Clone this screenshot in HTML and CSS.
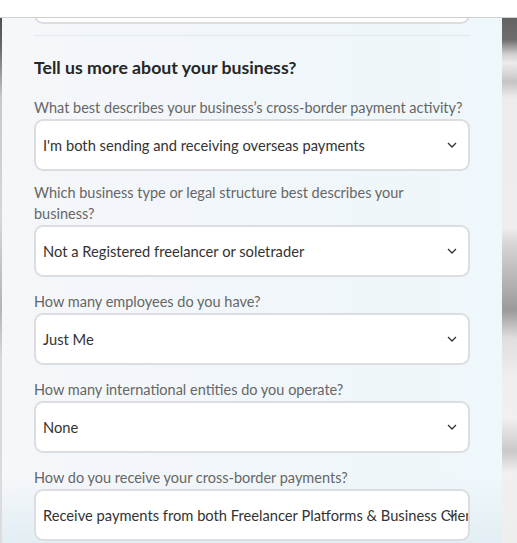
FILE: index.html
```html
<!DOCTYPE html>
<html lang="en">
<head>
<meta charset="utf-8">
<title>Tell us more about your business</title>
<link rel="stylesheet" href="styles.css">
</head>
<body>
<div class="topbar"></div>
<div class="stage">
  <div class="side side--left"></div>
  <main class="panel">
    <div class="select select--prev"><span class="select-value"></span></div>
    <hr class="divider">
    <h2 class="heading">Tell us more about your business?</h2>

    <div class="field field--first">
      <label class="label">What best describes your business’s cross-border payment activity?</label>
      <div class="select"><span class="select-value">I'm both sending and receiving overseas payments</span>
        <svg class="chev" width="10" height="6" viewBox="0 0 10 6"><path d="M1 1l4 4 4-4" fill="none" stroke="#333" stroke-width="1.3"/></svg></div>
    </div>

    <div class="field field--wrap">
      <label class="label">Which business type or legal structure best describes your business?</label>
      <div class="select"><span class="select-value">Not a Registered freelancer or soletrader</span>
        <svg class="chev" width="10" height="6" viewBox="0 0 10 6"><path d="M1 1l4 4 4-4" fill="none" stroke="#333" stroke-width="1.3"/></svg></div>
    </div>

    <div class="field">
      <label class="label">How many employees do you have?</label>
      <div class="select"><span class="select-value">Just Me</span>
        <svg class="chev" width="10" height="6" viewBox="0 0 10 6"><path d="M1 1l4 4 4-4" fill="none" stroke="#333" stroke-width="1.3"/></svg></div>
    </div>

    <div class="field">
      <label class="label">How many international entities do you operate?</label>
      <div class="select"><span class="select-value">None</span>
        <svg class="chev" width="10" height="6" viewBox="0 0 10 6"><path d="M1 1l4 4 4-4" fill="none" stroke="#333" stroke-width="1.3"/></svg></div>
    </div>

    <div class="field">
      <label class="label">How do you receive your cross-border payments?</label>
      <div class="select"><span class="select-value select-value--clip">Receive payments from both Freelancer Platforms &amp; Business Clients</span>
        <svg class="chev" width="10" height="6" viewBox="0 0 10 6"><path d="M1 1l4 4 4-4" fill="none" stroke="#333" stroke-width="1.3"/></svg></div>
    </div>
  </main>
  <div class="side side--right"></div>
</div>
</body>
</html>
```

FILE: styles.css
```css
html, body {
  margin: 0;
  padding: 0;
  height: 100%;
  overflow: hidden;
}
body {
  font-family: Lato, "Open Sans", "Liberation Sans", sans-serif;
  background: #ffffff;
  color: #333;
}
.topbar {
  height: 17px;
  background: #ffffff;
  border-bottom: 1px solid #cfcfcf;
}
.stage {
  display: flex;
  height: 525px;
}
.side--left {
  width: 2px;
  flex: none;
  background: linear-gradient(to bottom, #4e4e4e 0, #6a6a6a 30px, #c9c9c9 80px, #d6d6d6 200px, #b4b4b4 290px, #d8d8d8 340px, #dcdcdc 525px);
}
.side--right {
  width: 15px;
  flex: none;
  background: linear-gradient(to bottom, #636363 0, #6e6e6e 22px, #cfcfcf 36px, #ececec 45px, #c4c4c4 64px, #ececec 80px, #eeeeee 210px, #d7d7d7 225px, #9a9a9a 292px, #dedede 320px, #efefef 360px, #f0f0f0 400px, #c9c9c9 433px, #f0f0f0 455px, #eeeeee 525px);
}
.panel {
  width: 436px;
  flex: none;
  padding: 0 32px;
  overflow: hidden;
  background:
    linear-gradient(to bottom, rgba(230, 241, 245, 0) 460px, rgba(226, 238, 243, 1) 525px),
    linear-gradient(to right, #f5f7fa 0%, #f1f6fa 50%, #eef7fb 100%);
}
.select {
  position: relative;
  box-sizing: border-box;
  height: 52px;
  background: #ffffff;
  border: 2px solid #dcdde0;
  border-radius: 9px;
  display: flex;
  align-items: center;
  padding-left: 7px;
  overflow: hidden;
}
.select--prev {
  margin-top: -46px;
}
.select-value {
  font-size: 14.7px;
  color: #333333;
  white-space: nowrap;
}
.select-value--clip {
  overflow: hidden;
}
.chev {
  position: absolute;
  right: 11px;
  top: 21px;
}
.divider {
  border: 0;
  height: 1px;
  background: #e3e8ec;
  margin: 11px 0 0;
}
.heading {
  margin: 20px 0 0;
  font-size: 17.7px;
  line-height: 24px;
  font-weight: 700;
  color: #262626;
}
.field {
  margin-top: 14px;
}
.field--first {
  margin-top: 17px;
}
.field--wrap {
  margin-top: 11px;
}
.label {
  display: block;
  max-width: 431px;
  font-size: 14.5px;
  line-height: 21px;
  color: #666666;
  margin-bottom: 1px;
}
```
